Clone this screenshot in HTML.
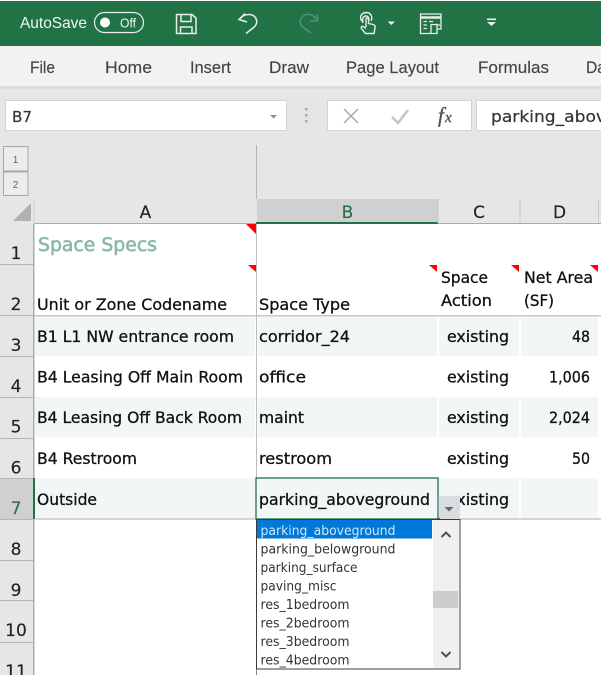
<!DOCTYPE html>
<html><head><meta charset="utf-8"><style>
html,body{margin:0;padding:0;background:#fff;width:601px;height:675px;overflow:hidden}
svg{display:block;filter:blur(.3px)}
.r{font-family:"Liberation Sans",sans-serif}
.d{font-family:"DejaVu Sans",sans-serif}
</style></head><body>
<svg width="601" height="675" viewBox="0 0 601 675" xmlns="http://www.w3.org/2000/svg">
<rect width="601" height="675" fill="#fff"/>
<!-- title bar -->
<rect y="1" width="601" height="45" fill="#217346"/>
<text class="r" x="20" y="28" font-size="16" fill="#f1f6f3" textLength="67" lengthAdjust="spacingAndGlyphs">AutoSave</text>
<rect x="94.5" y="12.5" width="49" height="20" rx="10" fill="none" stroke="#e8f0ec" stroke-width="1.2"/>
<circle cx="105" cy="22.5" r="5" fill="#fff"/>
<text class="r" x="120" y="27.5" font-size="13" fill="#f1f6f3" textLength="16" lengthAdjust="spacingAndGlyphs">Off</text>
<!-- save -->
<g fill="none" stroke="#e6efe9" stroke-width="1.5">
<path d="M176.5 14.5H192L196 18V33.5H176.5Z"/>
<path d="M181 14.5V21.5H191V14.5"/>
<path d="M180.5 33.5V27H192V33.5"/>
</g>
<!-- undo -->
<g fill="none" stroke="#e6efe9" stroke-width="1.5">
<path d="M245 13.5L239 19.5L247 22"/>
<path d="M239.5 19.5C243 14 251 13 255 17C258 21 257 25 253 28L246 33.5"/>
</g>
<!-- redo dim -->
<g fill="none" stroke="#55917a" stroke-width="1.4">
<path d="M317.5 14V21L310 21"/>
<path d="M317 20C313 13 306 13 302 17C299 21 300 25 304 28L311 33"/>
</g>
<!-- touch -->
<g fill="none" stroke="#e6efe9" stroke-width="1.4">
<path d="M363 22C359 19 360 13 366 12.5C371 12.5 373 17 371 21"/>
<path d="M363 23C362 19 363 16 366 16C368 16 369 18 369 20"/>
<path d="M366 27V19C366 17.8 368.5 17.8 368.5 19V23.5L373 24.5C375 25 375.5 26 375 28L374 33.5H365.5L361.5 28.5C360.5 27 362.5 25.5 364 27L366 28.5"/>
</g>
<path d="M387.5 21.5H395L391.3 25Z" fill="#e6efe9"/>
<!-- form -->
<g fill="none" stroke="#e6efe9" stroke-width="1.3">
<path d="M431 33.5H420.5V14H441V24"/>
<path d="M420.5 17.5H441" stroke-width="2.4"/>
<path d="M423.5 21.5H427M429 21.5H433M423.5 25H427M423.5 28.5H427"/>
<path d="M431 24.5H437V33.5H431ZM437 25H441V29H437"/>
</g>
<rect x="487" y="18.5" width="9" height="1.6" fill="#e6efe9"/>
<path d="M487 22H496L491.5 26Z" fill="#e6efe9"/>
<!-- tabs -->
<rect y="46" width="601" height="40" fill="#f3f2f1"/>
<g class="r" font-size="17" fill="#444" stroke="#444" stroke-width=".15">
<text x="30" y="73" textLength="25" lengthAdjust="spacingAndGlyphs">File</text>
<text x="105" y="73" textLength="47" lengthAdjust="spacingAndGlyphs">Home</text>
<text x="190" y="73" textLength="41" lengthAdjust="spacingAndGlyphs">Insert</text>
<text x="269" y="73" textLength="40" lengthAdjust="spacingAndGlyphs">Draw</text>
<text x="346" y="73" textLength="93" lengthAdjust="spacingAndGlyphs">Page Layout</text>
<text x="478" y="73" textLength="71" lengthAdjust="spacingAndGlyphs">Formulas</text>
<text x="586" y="73" textLength="20" lengthAdjust="spacingAndGlyphs">Da</text>
</g>
<!-- formula area -->
<rect y="86" width="601" height="113" fill="#e6e6e6"/>
<rect y="86" width="601" height="3" fill="#dcdcdc"/>
<rect x="5.5" y="100.5" width="281" height="30" fill="#fff" stroke="#d4d4d4"/>
<text class="d" x="12" y="122" font-size="15" fill="#333" stroke="#333" stroke-width=".2" textLength="20" lengthAdjust="spacingAndGlyphs">B7</text>
<path d="M270 115H277L273.5 118.5Z" fill="#8a8a8a"/>
<g fill="#a8a8a8"><rect x="305" y="108" width="2.5" height="2.5"/><rect x="305" y="114" width="2.5" height="2.5"/><rect x="305" y="120" width="2.5" height="2.5"/></g>
<rect x="327.5" y="100.5" width="144" height="30" fill="#fff" stroke="#d4d4d4"/>
<path d="M344 109L358 123M358 109L344 123" stroke="#a6a6a6" stroke-width="1.5" fill="none"/>
<path d="M392 117L398 123L408 110" stroke="#c4c4c4" stroke-width="2.5" fill="none"/>
<text x="438" y="122" font-family="Liberation Serif,serif" font-style="italic" font-size="21" fill="#555" stroke="#555" stroke-width=".4">f</text>
<text x="445" y="122" font-family="Liberation Serif,serif" font-style="italic" font-size="15" fill="#555" stroke="#555" stroke-width=".4">x</text>
<rect x="476.5" y="100.5" width="130" height="30" fill="#fff" stroke="#d4d4d4"/>
<text class="d" x="491" y="122" font-size="16" fill="#333" stroke="#333" stroke-width=".2" textLength="115" lengthAdjust="spacingAndGlyphs">parking_abov</text>
<!-- headers -->
<rect y="199" width="601" height="25" fill="#e6e6e6"/>
<rect y="145" width="34" height="530" fill="#e6e6e6"/>
<rect x="34" y="145" width="222" height="54" fill="#e6e6e6"/>
<!-- outline buttons -->
<rect x="3.5" y="146.5" width="24.5" height="24.5" fill="#ececec" stroke="#a8a8a8"/>
<rect x="3.5" y="172" width="24.5" height="23.5" fill="#ececec" stroke="#a8a8a8"/>
<text class="r" x="15.5" y="163" font-size="10" fill="#666" text-anchor="middle">1</text>
<text class="r" x="15.5" y="188" font-size="10" fill="#666" text-anchor="middle">2</text>
<rect x="256" y="145" width="1" height="54" fill="#b4b4b4"/>
<rect x="257" y="199" width="181" height="24" fill="#d0d0d0"/>
<rect x="256" y="222" width="182" height="2" fill="#217346"/>
<rect x="34" y="223" width="222" height="1" fill="#ababab"/>
<rect x="438" y="223" width="163" height="1" fill="#ababab"/>
<path d="M13 221H31V203Z" fill="#b0b0b0"/>
<rect x="33.5" y="199" width="1" height="24" fill="#d0d0d0"/>
<rect x="437.5" y="199" width="1" height="24" fill="#c8c8c8"/>
<rect x="519.5" y="199" width="1" height="24" fill="#c8c8c8"/>
<rect x="598" y="199" width="1" height="24" fill="#c8c8c8"/>
<g class="d" font-size="17" text-anchor="middle" fill="#222" stroke="#222" stroke-width=".15">
<text x="145.5" y="218">A</text>
<text x="347.5" y="218" fill="#2c6e4c" stroke="#2c6e4c">B</text>
<text x="479" y="218">C</text>
<text x="559.5" y="218">D</text>
</g>
<!-- row header -->
<rect x="33" y="224" width="1.5" height="451" fill="#ababab"/>
<g fill="#b5b5b5">
<rect y="264" width="33" height="1"/><rect y="315" width="33" height="1"/>
<rect y="356" width="33" height="1"/><rect y="397" width="33" height="1"/>
<rect y="438" width="33" height="1"/><rect y="478" width="33" height="1"/>
<rect y="519" width="33" height="1"/><rect y="560" width="33" height="1"/>
<rect y="600" width="33" height="1"/><rect y="642" width="33" height="1"/>
</g>
<rect y="479" width="33" height="40" fill="#d0d0d0"/>
<rect x="33" y="478" width="2" height="41" fill="#217346"/>
<g class="d" font-size="17" text-anchor="middle" fill="#222" stroke="#222" stroke-width=".15">
<text x="16" y="259">1</text><text x="16" y="310">2</text><text x="16" y="351">3</text>
<text x="16" y="392">4</text><text x="16" y="432.5">5</text><text x="16" y="473.5">6</text>
<text x="16" y="514" fill="#2c6e4c" stroke="#2c6e4c">7</text><text x="16" y="555">8</text><text x="16" y="596">9</text>
<text x="16" y="636">10</text><text x="16" y="677">11</text>
</g>
<!-- cells -->
<g fill="#f1f7f7">
<rect x="35" y="316" width="220" height="40"/><rect x="258" y="316" width="179" height="40"/><rect x="439" y="316" width="80" height="40"/><rect x="521" y="316" width="77" height="40"/>
<rect x="35" y="397" width="220" height="40"/><rect x="258" y="397" width="179" height="40"/><rect x="439" y="397" width="80" height="40"/><rect x="521" y="397" width="77" height="40"/>
<rect x="35" y="478" width="220" height="40"/><rect x="258" y="478" width="179" height="40"/><rect x="439" y="478" width="80" height="40"/><rect x="521" y="478" width="77" height="40"/>
</g>
<rect x="34" y="315" width="567" height="1.5" fill="#c8c8c8"/>
<rect x="256" y="224" width="1" height="295" fill="#bdbdbd"/>
<rect x="35" y="518" width="566" height="2" fill="#d4d4d4"/>
<rect x="256" y="520" width="1" height="155" fill="#888"/>
<path d="M246 224H256V234Z" fill="#f00"/>
<path d="M248 265H256V272Z" fill="#f00"/>
<path d="M429 265H437V272Z" fill="#f00"/>
<path d="M511 265H519V272Z" fill="#f00"/>
<path d="M590 265H598V272Z" fill="#f00"/>
<text class="d" x="38" y="251" font-size="19" fill="#88b8a9" stroke="#88b8a9" stroke-width=".6" textLength="119" lengthAdjust="spacingAndGlyphs">Space Specs</text>
<g class="d" font-size="16" fill="#111" stroke="#111" stroke-width=".3">
<text x="37" y="310" textLength="190" lengthAdjust="spacingAndGlyphs">Unit or Zone Codename</text>
<text x="259" y="310" textLength="91" lengthAdjust="spacingAndGlyphs">Space Type</text>
<text x="441" y="283" textLength="47" lengthAdjust="spacingAndGlyphs">Space</text>
<text x="441" y="306" textLength="51" lengthAdjust="spacingAndGlyphs">Action</text>
<text x="524" y="283" textLength="69" lengthAdjust="spacingAndGlyphs">Net Area</text>
<text x="524" y="306" textLength="30" lengthAdjust="spacingAndGlyphs">(SF)</text>
<text x="37" y="342" textLength="197" lengthAdjust="spacingAndGlyphs">B1 L1 NW entrance room</text>
<text x="37" y="382.5" textLength="206" lengthAdjust="spacingAndGlyphs">B4 Leasing Off Main Room</text>
<text x="37" y="423" textLength="205" lengthAdjust="spacingAndGlyphs">B4 Leasing Off Back Room</text>
<text x="37" y="464" textLength="100" lengthAdjust="spacingAndGlyphs">B4 Restroom</text>
<text x="37" y="505" textLength="60" lengthAdjust="spacingAndGlyphs">Outside</text>
<text x="259" y="342" textLength="91" lengthAdjust="spacingAndGlyphs">corridor_24</text>
<text x="259" y="382.5" textLength="47" lengthAdjust="spacingAndGlyphs">office</text>
<text x="259" y="423" textLength="45" lengthAdjust="spacingAndGlyphs">maint</text>
<text x="259" y="464" textLength="73" lengthAdjust="spacingAndGlyphs">restroom</text>
<text x="447" y="342" textLength="62" lengthAdjust="spacingAndGlyphs">existing</text>
<text x="447" y="382.5" textLength="62" lengthAdjust="spacingAndGlyphs">existing</text>
<text x="447" y="423" textLength="62" lengthAdjust="spacingAndGlyphs">existing</text>
<text x="447" y="464" textLength="62" lengthAdjust="spacingAndGlyphs">existing</text>
<text x="447" y="505" textLength="62" lengthAdjust="spacingAndGlyphs">existing</text>
<text x="572" y="342" textLength="18" lengthAdjust="spacingAndGlyphs">48</text>
<text x="549" y="382.5" textLength="41" lengthAdjust="spacingAndGlyphs">1,006</text>
<text x="549" y="423" textLength="41" lengthAdjust="spacingAndGlyphs">2,024</text>
<text x="572" y="464" textLength="18" lengthAdjust="spacingAndGlyphs">50</text>
</g>
<!-- hide the clipped first letter of row 7 column C -->
<rect x="438" y="479" width="20" height="19" fill="#f1f7f7"/>
<!-- active cell -->
<rect x="256" y="478" width="182" height="41" fill="#f1f7f7" stroke="#217346" stroke-width="1.3"/>
<text class="d" x="259" y="505" font-size="16" fill="#111" stroke="#111" stroke-width=".3" textLength="171" lengthAdjust="spacingAndGlyphs">parking_aboveground</text>
<!-- dropdown button -->
<rect x="438.5" y="496" width="21.5" height="23" fill="#d9dce0"/>
<path d="M444.5 507H453.5L449 511.5Z" fill="#666"/>
<rect x="438" y="518" width="2" height="2" fill="#217346"/>
<!-- list -->
<rect x="256.5" y="519.5" width="203.5" height="149.5" fill="#fff" stroke="#3c3c3c"/>
<rect x="257" y="520" width="175" height="18.5" fill="#0078d7"/>
<rect x="433" y="520" width="26" height="148" fill="#f0f0f0"/>
<rect x="433" y="591" width="25" height="17" fill="#cdcdcd"/>
<path d="M441.5 537L446 532.5L450.5 537" fill="none" stroke="#505050" stroke-width="2"/>
<path d="M441.5 652L446 656.5L450.5 652" fill="none" stroke="#505050" stroke-width="2"/>
<g class="d" font-size="13.5" fill="#333">
<text x="260.500" y="535" fill="#cfe6fa" textLength="135" lengthAdjust="spacingAndGlyphs">parking_aboveground</text>
<text x="260.500" y="553.5" textLength="135" lengthAdjust="spacingAndGlyphs">parking_belowground</text>
<text x="260.500" y="572" textLength="97" lengthAdjust="spacingAndGlyphs">parking_surface</text>
<text x="260.500" y="590.5" textLength="76" lengthAdjust="spacingAndGlyphs">paving_misc</text>
<text x="260.500" y="609" textLength="89" lengthAdjust="spacingAndGlyphs">res_1bedroom</text>
<text x="260.500" y="627.5" textLength="89" lengthAdjust="spacingAndGlyphs">res_2bedroom</text>
<text x="260.500" y="646" textLength="89" lengthAdjust="spacingAndGlyphs">res_3bedroom</text>
<text x="260.500" y="664.5" textLength="89" lengthAdjust="spacingAndGlyphs">res_4bedroom</text>
</g>
</svg>
</body></html>
